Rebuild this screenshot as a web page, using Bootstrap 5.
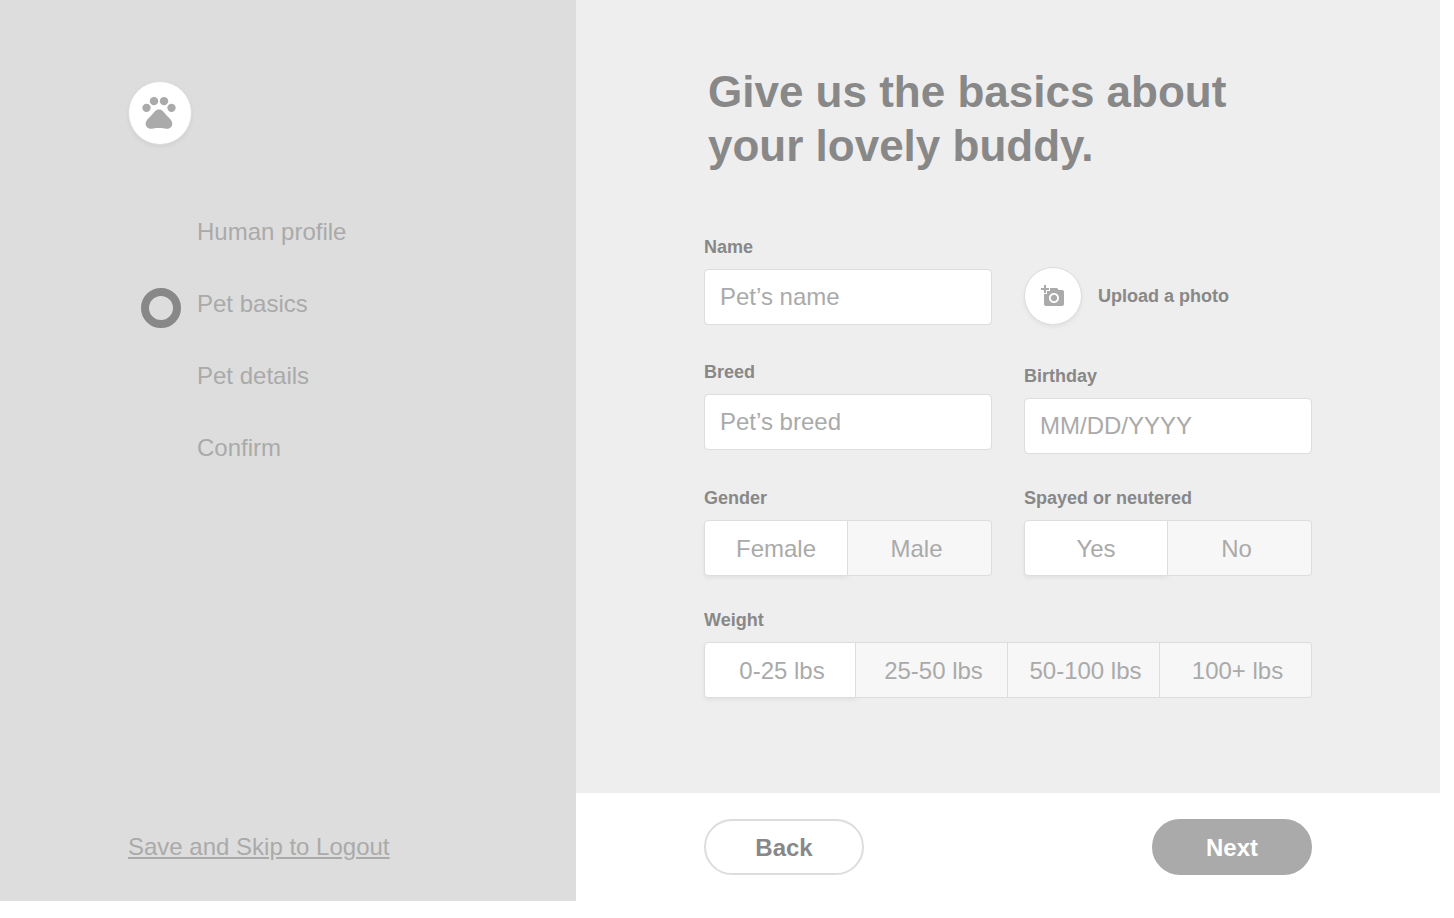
<!DOCTYPE html>
<html lang="en">
<head>
<meta charset="utf-8">
<meta name="viewport" content="width=device-width, initial-scale=1">
<title>Pet basics</title>
<link href="https://cdn.jsdelivr.net/npm/bootstrap@5.3.0/dist/css/bootstrap.min.css" rel="stylesheet">
<style>
  :root { --ink: #888; --soft: #aaa; --line: #ddd; --panel: #eee; }
  body { font-family: "Liberation Sans", Arial, sans-serif; font-size: 24px; line-height: 32px; color: var(--soft); background: #fff; }
  .shell { min-height: 100vh; padding: 0 14px 17px 0; }
  .side { flex: 0 0 40%; background: var(--line); padding: 81px 32px 38px 128px; }
  .main-panel { flex: 1 1 0; min-width: 0; background: var(--panel); }
  .disc { display: flex; align-items: center; justify-content: center; flex: none; border-radius: 50%; background: #fff; border: 1px solid var(--line); box-shadow: 0 2px 4px rgba(0,0,0,.06); }
  .disc svg { fill: var(--soft); }
  .disc-logo { width: 64px; height: 64px; padding: 0 2px 2px 0; }
  .disc-photo { width: 58px; height: 58px; }
  .steps { margin-top: 67px; padding-left: 13px; }
  .steps li { display: flex; height: 72px; }
  .steps a, .skip { color: var(--soft); }
  .steps a { margin-top: 4px; text-decoration: none; }
  .marker { width: 40px; height: 40px; margin-right: 16px; margin-top: 4px; flex: none; }
  .marker.current { border: 8px solid var(--ink); border-radius: 50%; }
  .content { padding: 65px 128px 64px; }
  .title { font-size: 44px; line-height: 54px; font-weight: 700; color: var(--ink); margin: 0 0 62px; padding-left: 4px; }
  .fields { --bs-gutter-x: 32px; --bs-gutter-y: 32px; margin-top: -32px; }
  .field-label { display: block; font-size: 18px; line-height: 24px; font-weight: 700; color: var(--ink); margin-bottom: 10px; }
  .stack-start { gap: 35px; }
  .stack-end { gap: 39px; padding-top: 32px; }
  .form-control { height: 56px; padding: 0 15px; border-color: var(--line); border-radius: 4px; font-size: 24px; color: var(--ink); }
  .form-control::placeholder { color: var(--soft); }
  .upload { display: flex; align-items: center; gap: 16px; padding: 0; border: 0; background: none; font-size: 18px; font-weight: 700; color: var(--ink); }
  .segments { display: flex; }
  .segments .btn { height: 56px; padding: 1px 0 0; font-size: 24px; line-height: 54px; border: solid var(--line); border-width: 1px 1px 1px 0; border-radius: 0; background: #f7f7f7; color: var(--soft); white-space: nowrap; }
  .segments .btn:first-of-type { border-left-width: 1px; border-radius: 4px 0 0 4px; }
  .segments .btn:last-of-type { border-radius: 0 4px 4px 0; }
  .segments .btn-check:checked + .btn { background: #fff; color: var(--soft); border-color: var(--line); box-shadow: 0 2px 4px rgba(0,0,0,.06); }
  .segments-two .btn { width: 50%; }
  .segments-two .btn:last-of-type { padding-right: 6px; }
  .segments-four .btn { width: 25%; padding-left: 4px; }
  .actions { background: #fff; padding: 26px 128px; }
  .btn-pill { width: 160px; height: 56px; padding: 2px 0 0; border: 2px solid var(--line); border-radius: 28px; font-size: 24px; font-weight: 700; color: var(--ink); }
  .btn-pill.solid { background: var(--soft); border-color: var(--soft); color: #fff; }
</style>
</head>
<body>
<div class="shell d-flex">
  <aside class="side d-flex flex-column align-items-start">
    <div class="disc disc-logo">
      <svg width="40" height="40" viewBox="0 0 24 24" aria-hidden="true"><circle cx="4.5" cy="9.5" r="2.5"/><circle cx="9" cy="5.5" r="2.5"/><circle cx="15" cy="5.5" r="2.5"/><circle cx="19.5" cy="9.5" r="2.5"/><path d="M17.34 14.86c-.87-1.02-1.6-1.89-2.48-2.91-.46-.54-1.05-1.08-1.75-1.32-.11-.04-.22-.07-.33-.09-.25-.04-.52-.04-.78-.04s-.53 0-.79.05c-.11.02-.22.05-.33.09-.7.24-1.28.78-1.75 1.32-.87 1.02-1.6 1.89-2.48 2.91-1.31 1.31-2.92 2.76-2.62 4.79.29 1.02 1.02 2.03 2.33 2.32.73.15 3.06-.44 5.54-.44h.18c2.48 0 4.81.58 5.54.44 1.31-.29 2.04-1.31 2.33-2.32.31-2.04-1.3-3.49-2.61-4.8z"/></svg>
    </div>
    <ol class="steps list-unstyled mb-0">
      <li><span class="marker"></span><a href="#human">Human profile</a></li>
      <li><span class="marker current"></span><a href="#basics" aria-current="step">Pet basics</a></li>
      <li><span class="marker"></span><a href="#details">Pet details</a></li>
      <li><span class="marker"></span><a href="#confirm">Confirm</a></li>
    </ol>
    <a class="skip mt-auto" href="#logout">Save and Skip to Logout</a>
  </aside>

  <form class="main-panel d-flex flex-column">
    <div class="content flex-grow-1">
      <h1 class="title">Give us the basics about<br>your lovely buddy.</h1>
      <div class="fields row">
        <div class="col-6 d-flex flex-column stack-start">
          <div>
            <label class="field-label" for="name">Name</label>
            <input class="form-control" id="name" type="text" placeholder="Pet’s name">
          </div>
          <div>
            <label class="field-label" for="breed">Breed</label>
            <input class="form-control" id="breed" type="text" placeholder="Pet’s breed">
          </div>
        </div>
        <div class="col-6 d-flex flex-column stack-end">
          <button class="upload" type="button">
            <span class="disc disc-photo"><svg width="24" height="24" viewBox="0 0 24 24" aria-hidden="true"><path d="M3 4V1h2v3h3v2H5v3H3V6H0V4h3zm3 6V7h3V4h7l1.83 2H21c1.1 0 2 .9 2 2v12c0 1.1-.9 2-2 2H5c-1.1 0-2-.9-2-2V10h3zm7 9c2.76 0 5-2.24 5-5s-2.24-5-5-5-5 2.24-5 5 2.24 5 5 5zm-3.2-5c0 1.77 1.43 3.2 3.2 3.2s3.2-1.43 3.2-3.2-1.43-3.2-3.2-3.2-3.2 1.43-3.2 3.2z"/></svg></span>
            <span>Upload a photo</span>
          </button>
          <div>
            <label class="field-label" for="birthday">Birthday</label>
            <input class="form-control" id="birthday" type="text" placeholder="MM/DD/YYYY">
          </div>
        </div>
        <div class="col-6">
          <span class="field-label" id="gender">Gender</span>
          <div class="segments segments-two" role="group" aria-labelledby="gender">
            <input class="btn-check" type="radio" name="gender" id="female" checked><label class="btn" for="female">Female</label>
            <input class="btn-check" type="radio" name="gender" id="male"><label class="btn" for="male">Male</label>
          </div>
        </div>
        <div class="col-6">
          <span class="field-label" id="spayed">Spayed or neutered</span>
          <div class="segments segments-two" role="group" aria-labelledby="spayed">
            <input class="btn-check" type="radio" name="spayed" id="yes" checked><label class="btn" for="yes">Yes</label>
            <input class="btn-check" type="radio" name="spayed" id="no"><label class="btn" for="no">No</label>
          </div>
        </div>
        <div class="col-12">
          <span class="field-label" id="weight">Weight</span>
          <div class="segments segments-four" role="group" aria-labelledby="weight">
            <input class="btn-check" type="radio" name="weight" id="w25" checked><label class="btn" for="w25">0-25 lbs</label>
            <input class="btn-check" type="radio" name="weight" id="w50"><label class="btn" for="w50">25-50 lbs</label>
            <input class="btn-check" type="radio" name="weight" id="w100"><label class="btn" for="w100">50-100 lbs</label>
            <input class="btn-check" type="radio" name="weight" id="wmore"><label class="btn" for="wmore">100+ lbs</label>
          </div>
        </div>
      </div>
    </div>
    <div class="actions d-flex justify-content-between">
      <button class="btn btn-pill" type="button">Back</button>
      <button class="btn btn-pill solid" type="submit">Next</button>
    </div>
  </form>
</div>
<script src="https://cdn.jsdelivr.net/npm/bootstrap@5.3.0/dist/js/bootstrap.bundle.min.js"></script>
</body>
</html>
